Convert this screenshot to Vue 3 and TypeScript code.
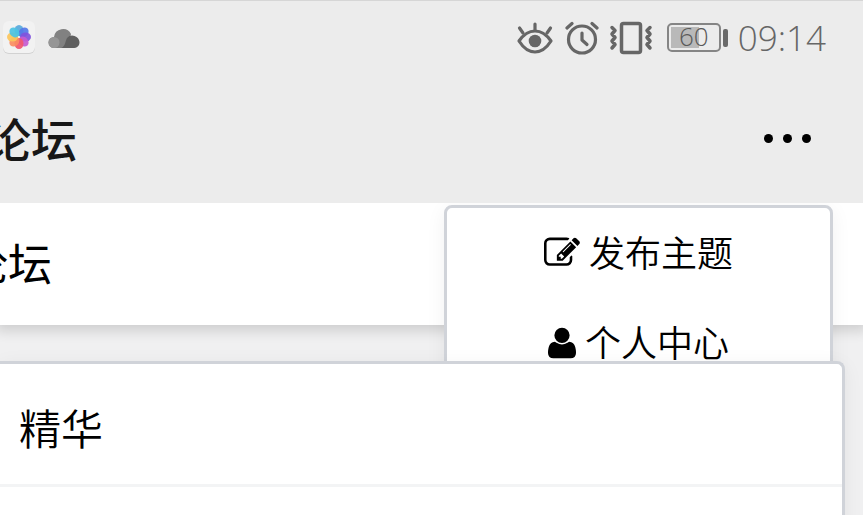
<script setup lang="ts">
interface MenuItem {
  label: string
  width: number
  viewBox: string
  path: string
}

const menu: MenuItem[] = [
  {
    label: '发布主题',
    width: 36,
    viewBox: '0 0 1792 1792',
    path: 'M888 1184l116-116-152-152-116 116v56h96v96h56zm440-720q-16-16-33 1l-350 350q-17 17-1 33t33-1l350-350q17-17 1-33zm80 594v190q0 119-84.5 203.5t-203.5 84.5h-832q-119 0-203.5-84.5t-84.5-203.5v-832q0-119 84.5-203.5t203.5-84.5h832q63 0 117 25 15 7 18 23 3 17-9 29l-49 49q-14 14-32 8-23-6-45-6h-832q-66 0-113 47t-47 113v832q0 66 47 113t113 47h832q66 0 113-47t47-113v-126q0-13 9-22l64-64q15-15 35-7t20 29zm-96-738l288 288-672 672h-288v-288zm444 132l-92 92-288-288 92-92q28-28 68-28t68 28l152 152q28 28 28 68t-28 68z',
  },
  {
    label: '个人中心',
    width: 28,
    viewBox: '192 0 1408 1792',
    path: 'M1600 1405q0 120-73 189.5t-194 69.5h-874q-121 0-194-69.5t-73-189.5q0-53 3.5-103.5t14-109 26.5-108.5 43-97.5 62-81 85.5-53.5 111.5-20q9 0 42 21.5t74.5 48 108 48 133.5 21.5 133.5-21.5 108-48 74.5-48 42-21.5q61 0 111.5 20t85.5 53.5 62 81 43 97.5 26.5 108.5 14 109 3.5 103.5zm-320-893q0 159-112.5 271.5t-271.5 112.5-271.5-112.5-112.5-271.5 112.5-271.5 271.5-112.5 271.5 112.5 112.5 271.5z',
  },
]

const petals: { angle: number; color: string }[] = [
  { angle: 0, color: '#58a9dc' },
  { angle: 45, color: '#5478e8' },
  { angle: 90, color: '#8052dc' },
  { angle: 135, color: '#c65bd0' },
  { angle: 180, color: '#f2566e' },
  { angle: 225, color: '#fb8d62' },
  { angle: 270, color: '#fbc65c' },
  { angle: 315, color: '#4cc3e4' },
]
</script>

<template>
  <div class="screen">
    <header class="top">
      <div class="status">
        <div class="notices">
          <svg class="photos" viewBox="0 0 34 34" aria-hidden="true">
            <rect x="1" y="2" width="32" height="31" rx="6" fill="#d2d2d2" />
            <rect x="1" y="0" width="32" height="32" rx="6" fill="#f2f2f2" />
            <ellipse
              v-for="p in petals"
              :key="p.angle"
              cx="17"
              cy="9.500"
              rx="4.500"
              ry="5.500"
              :fill="p.color"
              fill-opacity="0.92"
              :transform="`rotate(${p.angle} 17 16)`"
            />
          </svg>
          <svg class="cloud" viewBox="0 0 32 22" aria-hidden="true">
            <path d="M6 21a5.500 5.500 0 0 1 0-11A9 9 0 0 1 23 7L20 21z" fill="#818181" />
            <circle cx="6" cy="15.500" r="5.500" fill="#959595" />
            <path d="M13 21c4-1 4-6 6-10a7.200 7.200 0 0 1 12.500 4C31.500 19 29 21 25 21z" fill="#5f5f5f" />
          </svg>
        </div>
        <div class="system">
          <svg class="eye" viewBox="0 0 36 34" aria-hidden="true">
            <g fill="none" stroke="#666" stroke-width="3.200" stroke-linecap="round" stroke-linejoin="round">
              <path d="M2 20Q9 10 18 10T34 20Q27 31 18 31T2 20z" />
              <path d="M18 9V3M6 12L2.500 7M30 12L33.500 7" />
            </g>
            <circle cx="18" cy="20" r="6.300" fill="#666" />
          </svg>
          <svg class="alarm" viewBox="0 0 34 34" aria-hidden="true">
            <g fill="none" stroke="#666" stroke-width="3.200" stroke-linecap="round" stroke-linejoin="round">
              <circle cx="17" cy="18.500" r="13.500" />
              <path d="M17 12V19L22 23.500" />
              <path d="M2 7L7 2.500M27 2.500L32 7" />
            </g>
          </svg>
          <svg class="vibrate" viewBox="0 0 44 34" aria-hidden="true">
            <g fill="none" stroke="#666" stroke-linecap="round" stroke-linejoin="round">
              <rect x="12.500" y="2.500" width="19" height="29" rx="2" stroke-width="3.500" />
              <path d="M3 6.500L6 9.500 3 13 6 16.500 3 20 6 23.500 3 27M41 6.500L38 9.500 41 13 38 16.500 41 20 38 23.500 41 27" stroke-width="3.500" />
            </g>
          </svg>
          <div class="battery">
            <span class="shell"><span class="level">60</span></span>
            <span class="tip"></span>
          </div>
          <time class="clock">09:14</time>
        </div>
      </div>
      <div class="titlebar">
        <h1 class="title">论坛</h1>
        <button class="more" type="button" aria-label="更多">
          <i></i><i></i><i></i>
        </button>
      </div>
    </header>

    <nav class="nav">
      <a class="brand" href="#">论坛</a>
      <ul class="menu">
        <li v-for="item in menu" :key="item.label">
          <a class="entry" href="#">
            <svg :width="item.width" height="36" :viewBox="item.viewBox" aria-hidden="true">
              <path :d="item.path" />
            </svg>
            <span class="label">{{ item.label }}</span>
          </a>
        </li>
      </ul>
    </nav>

    <main class="card">
      <h2 class="row">精华</h2>
      <div class="row"></div>
    </main>
  </div>
</template>

<style>
body {
  background: #f0f0f1;
}
</style>

<style scoped>
.screen {
  height: 100vh;
  overflow: hidden;
  color: #000;
  font-family: "Noto Sans CJK SC", sans-serif;
}

.top {
  background: #ececec;
  border-top: 1px solid #d6d6d6;
}

.status {
  display: flex;
  align-items: center;
  justify-content: space-between;
  height: 73px;
  padding: 0 37px 0 2px;
}

.notices,
.system {
  display: flex;
  align-items: center;
}

.notices {
  gap: 12px;
}

.photos {
  width: 34px;
  height: 34px;
}

.cloud {
  width: 32px;
  height: 22px;
}

.eye {
  width: 36px;
  height: 34px;
  margin-right: 12px;
}

.alarm {
  width: 34px;
  height: 34px;
  margin-right: 10px;
}

.vibrate {
  width: 44px;
  height: 34px;
  margin-right: 14px;
}

.battery {
  display: flex;
  align-items: center;
  gap: 2px;
  margin-right: 10px;
}

.shell {
  box-sizing: border-box;
  width: 54px;
  height: 29px;
  padding: 2px;
  border: 2px solid #858585;
  border-radius: 5px;
}

.level {
  display: block;
  height: 21px;
  background: linear-gradient(to right, #b9b9b9 60%, transparent 60%);
  color: #5a5a5a;
  font: 300 26px/18px "Open Sans", sans-serif;
  text-align: center;
}

.tip {
  width: 5px;
  height: 18px;
  border-radius: 2px;
  background: #6a6a6a;
}

.clock {
  color: #666;
  font: 300 35px/40px "Open Sans", sans-serif;
}

.titlebar {
  display: flex;
  align-items: center;
  justify-content: space-between;
  height: 129px;
  padding-right: 46px;
}

.title,
.brand {
  display: flex;
  justify-content: flex-end;
  padding-bottom: 4px;
  line-height: 64px;
  white-space: nowrap;
}

.title {
  width: 77px;
  margin: 0;
  color: #171717;
  font-size: 46px;
  font-weight: 500;
}

.more {
  display: flex;
  gap: 10px;
  padding: 12px 6px;
  border: 0;
  background: none;
}

.more i {
  width: 9px;
  height: 9px;
  border-radius: 50%;
  background: #000;
}

.nav {
  position: relative;
  display: flex;
  align-items: center;
  height: 122px;
  background: #fff;
  box-shadow: 0 2px 12px 4px rgba(0, 0, 0, 0.14);
  clip-path: inset(0 0 -200px 0);
}

.brand {
  width: 52px;
  color: #000;
  font-size: 44px;
  text-decoration: none;
}

.menu {
  position: absolute;
  top: 2px;
  right: 30px;
  box-sizing: border-box;
  width: 389px;
  margin: 0;
  padding: 0;
  border: 3px solid #d0d3d9;
  border-radius: 8px;
  background: #fff;
  box-shadow: 0 4px 20px rgba(0, 0, 0, 0.06);
  list-style: none;
}

.entry {
  display: flex;
  align-items: center;
  justify-content: center;
  gap: 9px;
  height: 90px;
  color: #000;
  font-size: 36px;
  font-weight: 350;
  line-height: 52px;
  text-decoration: none;
}

.label {
  padding-bottom: 4px;
}

.card {
  position: relative;
  margin: 36px 18px 0 0;
  border: solid #d0d3d9;
  border-width: 3px 3px 0 0;
  border-radius: 0 8px 0 0;
  background: #fff;
  box-shadow: 0 4px 20px rgba(0, 0, 0, 0.06);
}

.row {
  display: flex;
  align-items: center;
  height: 116px;
  margin: 0;
  padding: 4px 0 0 19px;
  border-bottom: 3px solid #f3f4f5;
  font-size: 42px;
  font-weight: 350;
}
</style>
